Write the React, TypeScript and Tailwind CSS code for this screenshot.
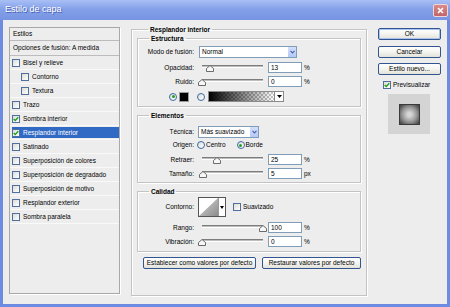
import React from 'react';

/** Small XP-style checkbox */
function Check({ checked }: { checked?: boolean }) {
  return (
    <span className="w-[8px] h-[8px] shrink-0 border border-[#4f6f9f] bg-gradient-to-br from-[#dcdcd6] to-white flex items-center justify-center">
      {checked && (
        <svg width="6" height="6" viewBox="0 0 6 6">
          <path d="M0.7 2.9 L2.3 4.5 L5.3 1.2" fill="none" stroke="#21a121" strokeWidth="1.4" />
        </svg>
      )}
    </span>
  );
}

function Radio({ on }: { on?: boolean }) {
  return (
    <span className="w-[8px] h-[8px] shrink-0 rounded-full border border-[#3d6aa8] bg-gradient-to-br from-[#dcdcd6] to-white flex items-center justify-center">
      {on && <span className="w-[3px] h-[3px] rounded-full bg-[#21a121]" />}
    </span>
  );
}

/** Photoshop slider: thin track with a little house-shaped thumb. pos is 0..1 */
function Slider({ pos }: { pos: number }) {
  return (
    <div className="relative w-[61px] h-[11px] ml-[8px] shrink-0">
      <div className="absolute left-0 right-0 top-[3px] h-[3px] bg-[#bdbdbd] border-t border-[#7d7d7d] border-b border-b-white" />
      <svg
        className="absolute top-[3px]"
        style={{ left: pos * 61 - 4 }}
        width="8"
        height="7"
        viewBox="0 0 8 7"
      >
        <path d="M4 0.5 L7.5 3.5 V6.5 H0.5 V3.5 Z" fill="#f7f7f7" stroke="#6b6b6b" />
      </svg>
    </div>
  );
}

function NumBox({ value, unit }: { value: string; unit: string }) {
  return (
    <>
      <div className="w-[34px] h-[11px] ml-[5px] shrink-0 border border-[#7f9db9] bg-white pl-[2px] flex items-center">
        {value}
      </div>
      <span className="ml-[2px]">{unit}</span>
    </>
  );
}

function Chevron() {
  return (
    <svg width="5" height="4" viewBox="0 0 5 4">
      <path d="M0.5 0.8 L2.5 2.8 L4.5 0.8" fill="none" stroke="#4d61a8" strokeWidth="1.2" />
    </svg>
  );
}

function Combo({ text, className }: { text: string; className: string }) {
  return (
    <div className={`h-[12px] shrink-0 border border-[#7f9db9] bg-white flex items-center ${className}`}>
      <span className="flex-1 pl-[2px] whitespace-nowrap">{text}</span>
      <span className="w-[9px] h-full bg-gradient-to-b from-[#d3e0fc] to-[#b4c9f6] border-l border-white flex items-center justify-center">
        <Chevron />
      </span>
    </div>
  );
}

function Btn({ children, className }: { children: React.ReactNode; className: string }) {
  return (
    <div
      className={`h-[12px] flex items-center justify-center whitespace-nowrap rounded-[2px] border border-[#33558f] bg-gradient-to-b from-white via-[#f4f4f0] to-[#e3e2da] ${className}`}
    >
      {children}
    </div>
  );
}

function Row({ label, children, className }: { label: string; children?: React.ReactNode; className: string }) {
  return (
    <div className={`flex items-center ${className}`}>
      <span className="w-[56px] shrink-0 text-right whitespace-nowrap">{label}</span>
      {children}
    </div>
  );
}

function Group({ title, className, children }: { title: string; className: string; children: React.ReactNode }) {
  return (
    <fieldset className={`border border-[#c3c3c3] shadow-[inset_1px_1px_0_#fff,1px_1px_0_#fff] ${className}`}>
      <legend className="ml-[11px] px-[2px] leading-[9px] font-bold">{title}</legend>
      {children}
    </fieldset>
  );
}

const styles: { name: string; checked?: boolean; indent?: boolean; selected?: boolean }[] = [
  { name: 'Bisel y relieve' },
  { name: 'Contorno', indent: true },
  { name: 'Textura', indent: true },
  { name: 'Trazo' },
  { name: 'Sombra interior', checked: true },
  { name: 'Resplandor interior', checked: true, selected: true },
  { name: 'Satinado' },
  { name: 'Superposición de colores' },
  { name: 'Superposición de degradado' },
  { name: 'Superposición de motivo' },
  { name: 'Resplandor exterior' },
  { name: 'Sombra paralela' },
];

export default function App() {
  return (
    <div className="w-[450px] h-[307px] flex flex-col bg-[#6d8be0] font-['Liberation_Sans',Arial,sans-serif] text-[6.5px] text-black overflow-hidden">
      {/* Title bar */}
      <div className="h-[20px] shrink-0 flex items-center pl-[5px] pr-[2px] bg-gradient-to-b from-[#a9bff5] via-[#819ee8] to-[#7795e3]">
        <span className="flex-1 text-[9px] text-white [text-shadow:1px_1px_0_#4a62b0]">Estilo de capa</span>
        <span className="w-[15px] h-[13px] rounded-[2px] border border-[#f1d6d6] bg-gradient-to-b from-[#d98a8a] to-[#c0656a] flex items-center justify-center">
          <svg width="7" height="7" viewBox="0 0 7 7">
            <path d="M1 1 L6 6 M6 1 L1 6" stroke="white" strokeWidth="1.6" />
          </svg>
        </span>
      </div>

      {/* Body */}
      <div className="flex-1 mx-[3px] mb-[3px] bg-[#ededed] flex pl-[6px] pt-[5px]">
        {/* Styles list */}
        <div className="w-[111px] h-[267px] mt-[2px] shrink-0 border border-[#a8a8a8] shadow-[1px_1px_0_#fff] flex flex-col">
          <div className="h-[13px] shrink-0 flex items-center pl-[3px] border-b border-[#bcbcbc]">Estilos</div>
          <div className="h-[15px] shrink-0 flex items-center pl-[3px] border-b border-[#bcbcbc]">
            Opciones de fusión: A medida
          </div>
          {styles.map((s) => (
            <div
              key={s.name}
              className={`h-[14px] shrink-0 flex items-center gap-[3px] border-b border-[#f9f9f9] ${s.indent ? 'pl-[11px]' : 'pl-[2px]'} ${
                s.selected ? 'bg-[#316ac5] bg-clip-content py-[1px] text-white' : ''
              }`}
            >
              <Check checked={s.checked} />
              <span className="whitespace-nowrap">{s.name}</span>
            </div>
          ))}
        </div>

        {/* Settings */}
        <Group title="Resplandor interior" className="w-[236px] h-[271px] ml-[11px] shrink-0 px-[5px] flex flex-col">
          <Group title="Estructura" className="h-[73px] shrink-0 flex flex-col">
            <Row label="Modo de fusión:" className="mt-[3px]">
              <Combo text="Normal" className="w-[98px] ml-[5px]" />
            </Row>
            <Row label="Opacidad:" className="mt-[4px] h-[11px]">
              <Slider pos={0.13} />
              <NumBox value="13" unit="%" />
            </Row>
            <Row label="Ruido:" className="mt-[3px] h-[11px]">
              <Slider pos={0} />
              <NumBox value="0" unit="%" />
            </Row>
            <div className="mt-[4px] h-[11px] flex items-center pl-[31px]">
              <Radio on />
              <span className="w-[10px] h-[10px] ml-[2px] bg-black border border-[#9a9a9a]" />
              <span className="ml-[8px]">
                <Radio />
              </span>
              <div className="w-[76px] h-[11px] ml-[3px] flex border border-[#8a8a8a]">
                <div className="flex-1 bg-[linear-gradient(to_right,#000,transparent),repeating-conic-gradient(#c4c4c4_0_25%,#fff_0_50%)] bg-[length:100%_100%,4px_4px]" />
                <div className="w-[9px] bg-white border-l border-[#8a8a8a] flex items-center justify-center">
                  <svg width="5" height="3" viewBox="0 0 5 3">
                    <path d="M0 0 H5 L2.5 3 Z" fill="#000" />
                  </svg>
                </div>
              </div>
            </div>
          </Group>

          <Group title="Elementos" className="h-[72px] mt-[4px] shrink-0 flex flex-col">
            <Row label="Técnica:" className="mt-[6px]">
              <Combo text="Más suavizado" className="w-[61px] ml-[4px]" />
            </Row>
            <Row label="Origen:" className="mt-[2px] h-[10px]">
              <span className="ml-[3px]">
                <Radio />
              </span>
              <span className="ml-[1px]">Centro</span>
              <span className="ml-[11px]">
                <Radio on />
              </span>
              <span className="ml-[1px]">Borde</span>
            </Row>
            <Row label="Retraer:" className="mt-[4px] h-[11px]">
              <Slider pos={0.25} />
              <NumBox value="25" unit="%" />
            </Row>
            <Row label="Tamaño:" className="mt-[3px] h-[11px]">
              <Slider pos={0.02} />
              <NumBox value="5" unit="px" />
            </Row>
          </Group>

          <Group title="Calidad" className="h-[65px] mt-[4px] shrink-0 flex flex-col">
            <Row label="Contorno:" className="mt-[1px] h-[20px]">
              <div className="w-[28px] h-[20px] ml-[4px] flex border border-[#555] bg-white">
                <svg width="19" height="18" viewBox="0 0 19 18">
                  <defs>
                    <linearGradient id="cg" x1="0" y1="0" x2="1" y2="1">
                      <stop offset="0" stopColor="#d8d8d8" />
                      <stop offset="1" stopColor="#8c8c8c" />
                    </linearGradient>
                  </defs>
                  <polygon points="0,18 19,0 19,18" fill="url(#cg)" />
                </svg>
                <div className="flex-1 border-l border-[#999] flex items-center justify-center">
                  <svg width="4" height="3" viewBox="0 0 4 3">
                    <path d="M0 0 H4 L2 3 Z" fill="#000" />
                  </svg>
                </div>
              </div>
              <span className="ml-[7px]">
                <Check />
              </span>
              <span className="ml-[2px]">Suavizado</span>
            </Row>
            <Row label="Rango:" className="mt-[5px] h-[11px]">
              <Slider pos={1} />
              <NumBox value="100" unit="%" />
            </Row>
            <Row label="Vibración:" className="mt-[3px] h-[11px]">
              <Slider pos={0} />
              <NumBox value="0" unit="%" />
            </Row>
          </Group>

          <div className="mt-[5px] flex gap-[6px]">
            <Btn className="w-[113px] ml-[6px]">Establecer como valores por defecto</Btn>
            <Btn className="w-[99px]">Restaurar valores por defecto</Btn>
          </div>
        </Group>

        {/* Right column */}
        <div className="w-[63px] ml-[11px] shrink-0 flex flex-col">
          <Btn className="mt-[3px] shadow-[inset_0_0_0_1px_#a9c2ee]">OK</Btn>
          <Btn className="mt-[6px]">Cancelar</Btn>
          <Btn className="mt-[5px]">Estilo nuevo...</Btn>
          <div className="mt-[5px] h-[9px] flex items-center gap-[2px] pl-[5px]">
            <Check checked />
            <span>Previsualizar</span>
          </div>
          <div className="w-[42px] h-[40px] mt-[5px] ml-[10px] bg-[#d4d4d4] flex items-center justify-center">
            <div className="w-[21px] h-[21px] border border-[#3a3a3a] bg-[radial-gradient(closest-side,#d6d6d6_20%,#9a9a9a_75%,#4a4a4a_130%)]" />
          </div>
        </div>
      </div>
    </div>
  );
}
